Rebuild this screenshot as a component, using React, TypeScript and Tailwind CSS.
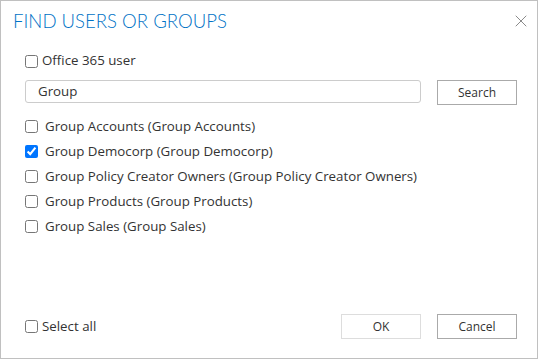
import { X } from 'lucide-react'

const groups = [
  { name: 'Group Accounts (Group Accounts)', checked: false },
  { name: 'Group Democorp (Group Democorp)', checked: true },
  { name: 'Group Policy Creator Owners (Group Policy Creator Owners)', checked: false },
  { name: 'Group Products (Group Products)', checked: false },
  { name: 'Group Sales (Group Sales)', checked: false },
]

const Check = ({ checked }: { checked?: boolean }) => (
  <input type="checkbox" defaultChecked={checked} className="m-0 w-[13px] h-[13px] accent-[#0075ff] shrink-0" />
)

const App = () => {
  return (
    <div
      className="w-[538px] h-[359px] bg-white border border-[#c0c0c0] flex flex-col text-[13.3px] text-[#333]"
      style={{ fontFamily: '"Open Sans", "Noto Sans", sans-serif' }}
    >
      <div className="flex items-start justify-between pl-[12px] pr-[6px] pt-[6px] h-[46px]">
        <h1
          className="text-[18.6px] font-light text-[#0072c6] leading-[28px]"
          style={{ fontFamily: 'Lato, "Open Sans", sans-serif' }}
        >
          FIND USERS OR GROUPS
        </h1>
        <X className="w-[20px] h-[20px] text-[#8a8a8a] mt-[4px]" strokeWidth={1.2} />
      </div>

      <div className="flex-1 flex flex-col pl-[24px] pr-[20px]">
        <label className="flex items-center gap-[4px] h-[20px] mt-[4px]">
          <Check />
          <span>Office 365 user</span>
        </label>

        <div className="flex items-start mt-[9px] gap-[16px]">
          <div className="w-[396px] h-[23px] border border-[#ccc] rounded-[3px] flex items-center pl-[12px]">
            Group
          </div>
          <button className="w-[80px] h-[25px] border border-[#aaa] text-[12px] bg-white">Search</button>
        </div>

        <div className="flex flex-col mt-[9px]">
          {groups.map((g) => (
            <label key={g.name} className="flex items-center gap-[7px] h-[25px]">
              <Check checked={g.checked} />
              <span>{g.name}</span>
            </label>
          ))}
        </div>

        <div className="flex-1" />

        <div className="flex items-center mb-[19px]">
          <label className="flex items-center gap-[4px] flex-1">
            <Check />
            <span>Select all</span>
          </label>
          <div className="flex gap-[16px]">
            <button className="w-[80px] h-[25px] border border-[#ddd] text-[12px] bg-white">OK</button>
            <button className="w-[80px] h-[25px] border border-[#aaa] text-[12px] bg-white">Cancel</button>
          </div>
        </div>
      </div>
    </div>
  )
}

export default App
